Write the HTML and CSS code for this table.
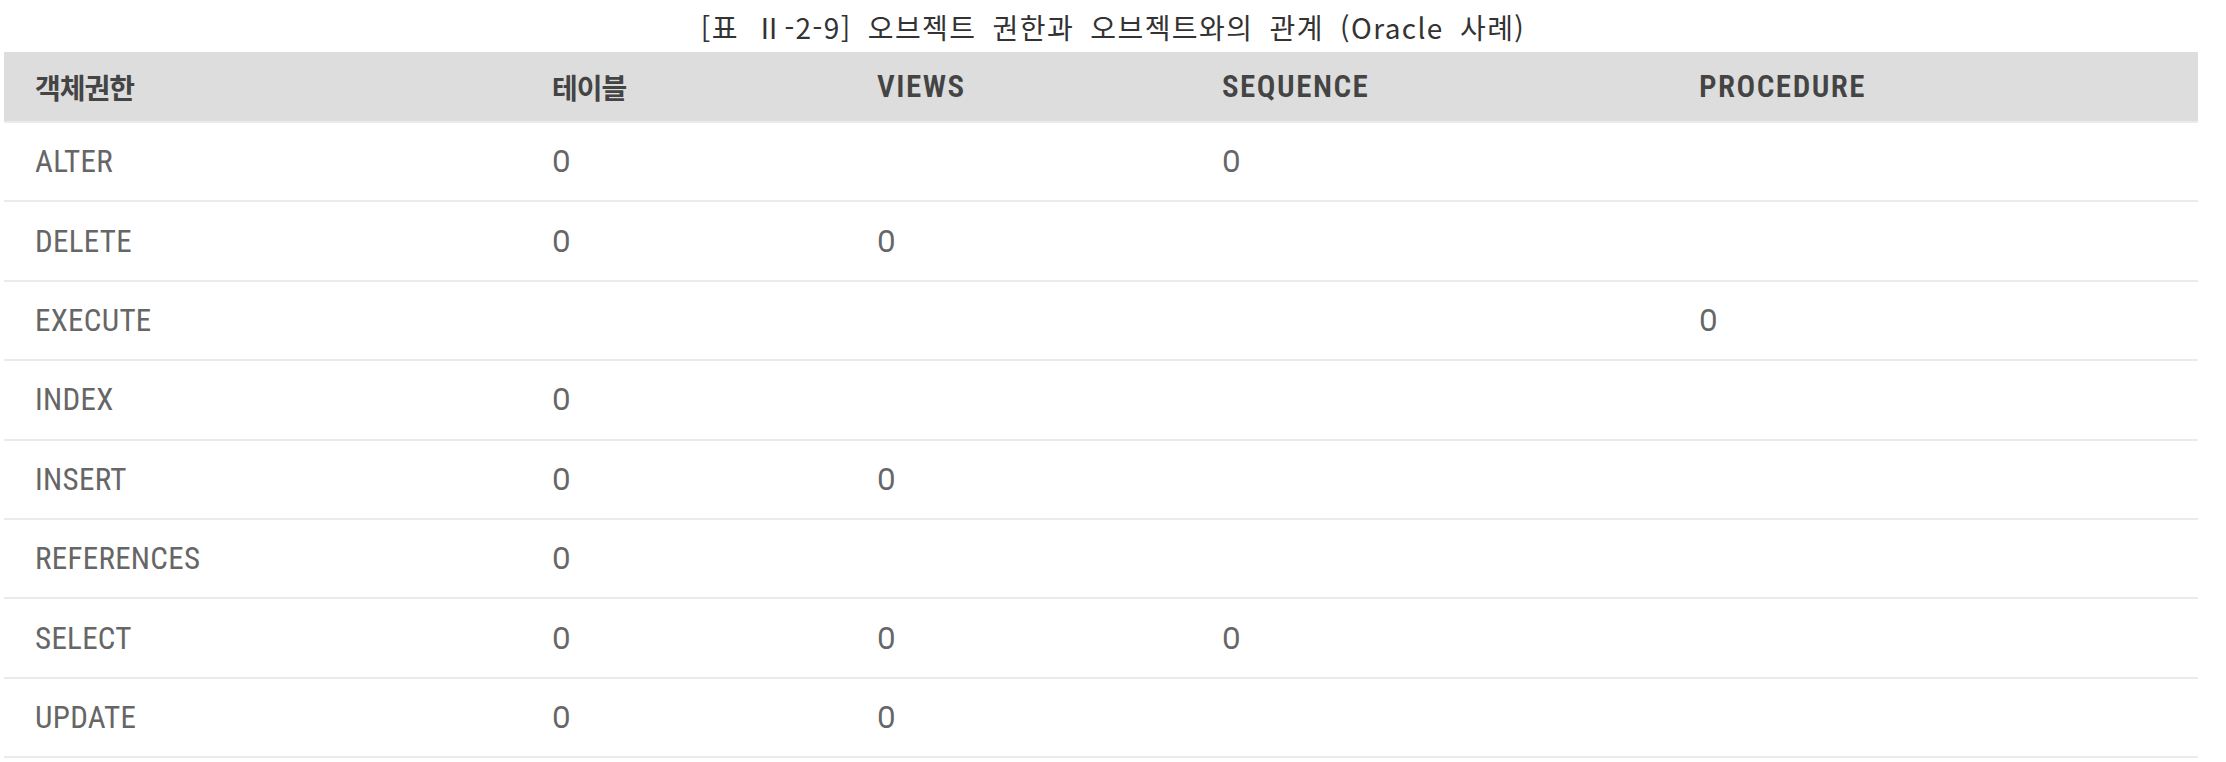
FILE: index.html
```html
<!DOCTYPE html>
<html lang="ko">
<head>
<meta charset="utf-8">
<title>오브젝트 권한과 오브젝트와의 관계</title>
<link rel="stylesheet" href="styles.css">
</head>
<body>
<div class="caption">[표 Ⅱ-2-9] 오브젝트 권한과 오브젝트와의 관계 (Oracle 사례)</div>
<div class="wrap">
  <table class="grid">
    <colgroup>
      <col class="c1"><col class="c2"><col class="c3"><col class="c4"><col class="c5">
    </colgroup>
    <thead>
      <tr>
        <th><span class="ko">객체권한</span></th>
        <th><span class="ko">테이블</span></th>
        <th>VIEWS</th>
        <th>SEQUENCE</th>
        <th>PROCEDURE</th>
      </tr>
    </thead>
    <tbody>
      <tr><td>ALTER</td><td>O</td><td></td><td>O</td><td></td></tr>
      <tr><td>DELETE</td><td>O</td><td>O</td><td></td><td></td></tr>
      <tr><td>EXECUTE</td><td></td><td></td><td></td><td>O</td></tr>
      <tr><td>INDEX</td><td>O</td><td></td><td></td><td></td></tr>
      <tr><td>INSERT</td><td>O</td><td>O</td><td></td><td></td></tr>
      <tr><td>REFERENCES</td><td>O</td><td></td><td></td><td></td></tr>
      <tr><td>SELECT</td><td>O</td><td>O</td><td>O</td><td></td></tr>
      <tr><td>UPDATE</td><td>O</td><td>O</td><td></td><td></td></tr>
    </tbody>
  </table>
</div>
</body>
</html>
```
FILE: styles.css
```css
html, body {
  margin: 0;
  padding: 0;
  background: #fff;
}
.caption {
  height: 52px;
  display: flex;
  align-items: center;
  justify-content: center;
  font-family: "Noto Sans CJK KR", sans-serif;
  font-size: 28px;
  letter-spacing: 1.4px;
  word-spacing: 7px;
  color: #333;
  padding-top: 2px;
  box-sizing: border-box;
}
.wrap {
  width: 2194px;
  padding-left: 4px;
}
.grid {
  width: 2194px;
  border-collapse: collapse;
  table-layout: fixed;
  font-family: "Roboto Condensed", "Noto Sans CJK KR", sans-serif;
  font-size: 31px;
}
.c1 { width: 517px; }
.c2 { width: 325px; }
.c3 { width: 345px; }
.c4 { width: 477px; }
.c5 { width: 530px; }
.grid th {
  background: #dddddd;
  color: #444;
  font-weight: 600;
  letter-spacing: 1.5px;
  text-align: left;
  height: 70px;
  padding: 0 0 0 31px;
  border-bottom: 2px solid #ebebeb;
  box-sizing: border-box;
  vertical-align: middle;
}
.grid th .ko {
  font-family: "Noto Sans CJK KR", sans-serif;
  font-size: 28px;
  font-weight: 700;
  letter-spacing: -1px;
}
.grid td {
  color: #666;
  font-weight: 400;
  letter-spacing: 0.3px;
  height: 77.4px;
  padding: 0 0 0 31px;
  border-bottom: 2px solid #ebebeb;
  vertical-align: middle;
}
```
